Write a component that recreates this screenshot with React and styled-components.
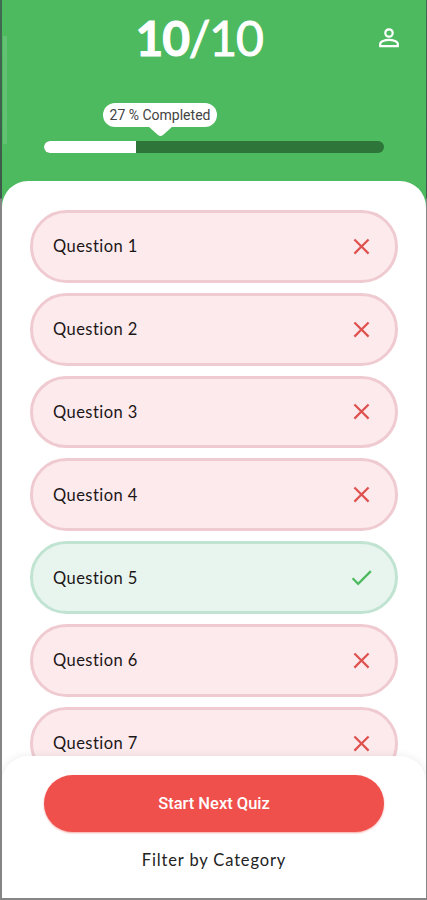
import React from "react";
import styled, { createGlobalStyle } from "styled-components";
import { MdCheck, MdClose } from "react-icons/md";

const GlobalStyle = createGlobalStyle`
  * {
    box-sizing: border-box;
  }
  body {
    margin: 0;
    background: #8b8b8b;
    font-family: Lato, "Liberation Sans", sans-serif;
  }
`;

const Screen = styled.div`
  width: 427px;
  height: 900px;
  padding: 0 1px 2px 2px;
  background: linear-gradient(#416b53 0px, #3d594a 198px, #858585 199px);
`;

const Page = styled.div`
  display: flex;
  flex-direction: column;
  height: 898px;
  overflow: hidden;
  background: linear-gradient(#62c172, #62c172) 1px 36px / 4px 108px no-repeat #4dba5f;
`;

const Header = styled.header`
  display: grid;
  grid-template-columns: 1fr auto 1fr;
  align-items: center;
  height: 76px;
  padding: 0 27px 0 0;
`;

const Score = styled.h1`
  grid-column: 2;
  margin: 0;
  width: 130px;
  color: #fff;
  font-size: 48px;
  line-height: 76px;
  font-weight: 400;
  letter-spacing: -1.2px;
  white-space: nowrap;
  -webkit-text-stroke: 1px #fff;
`;

const Current = styled.span`
  font-weight: 700;
`;

const ProfileIcon = styled.svg`
  grid-column: 3;
  justify-self: end;
  width: 20px;
  height: 20px;
`;

const Progress = styled.div`
  height: 105px;
  padding: 27px 42px 0;
`;

const Tooltip = styled.div`
  position: relative;
  width: 114px;
  height: 24px;
  margin: 0 0 14px 59px;
  border-radius: 12px;
  background: #fff;
  color: #444;
  font-family: Roboto, sans-serif;
  font-size: 14px;
  line-height: 24px;
  text-align: center;
  white-space: nowrap;
`;

const Pointer = styled.svg`
  position: absolute;
  left: 45px;
  top: 23px;
  width: 25px;
  height: 11px;
`;

const Track = styled.div`
  height: 12px;
  border-radius: 6px;
  overflow: hidden;
  background: #2d7539;
`;

const Fill = styled.div`
  width: ${({ $percent }) => $percent}%;
  height: 100%;
  background: #fff;
`;

const Sheet = styled.main`
  flex: 1;
  display: flex;
  flex-direction: column;
  min-height: 0;
  border-radius: 26px 26px 0 0;
  overflow: hidden;
  background: #fff;
`;

const List = styled.div`
  flex: 1;
  display: flex;
  flex-direction: column;
  gap: 10px;
  min-height: 0;
  padding: 29px 28px 0;
  overflow: hidden;
`;

const Row = styled.div`
  display: flex;
  flex-shrink: 0;
  align-items: center;
  justify-content: space-between;
  height: 72.8px;
  padding: 0 20px;
  border: 3px solid ${({ $correct }) => ($correct ? "#c1e3d2" : "#efcbd1")};
  border-radius: 37px;
  background: ${({ $correct }) => ($correct ? "#e8f5ee" : "#fdeaec")};
  color: ${({ $correct }) => ($correct ? "#4dba5f" : "#df514f")};

  svg {
    width: 27px;
    height: 27px;
  }
`;

const Label = styled.span`
  color: #1b1718;
  font-size: 16.5px;
  line-height: 20px;
  letter-spacing: 0.45px;
`;

const Footer = styled.footer`
  position: relative;
  display: flex;
  flex-direction: column;
  align-items: center;
  height: 142px;
  margin-top: -24px;
  padding: 19px 42px 0;
  border-radius: 26px 26px 0 0;
  background: #fff;
  box-shadow: 0 0 8px rgba(0, 0, 0, 0.09);
`;

const StartButton = styled.button`
  width: 100%;
  height: 57px;
  flex-shrink: 0;
  border: 0;
  border-radius: 29px;
  background: #ef504b;
  color: #fff;
  font-family: Roboto, sans-serif;
  font-size: 16.5px;
  font-weight: 500;
  box-shadow: 0 1px 2px rgba(239, 80, 75, 0.5);
`;

const FilterButton = styled.button`
  margin-top: 18px;
  padding: 0;
  border: 0;
  background: none;
  color: #222;
  font-family: inherit;
  font-size: 16.5px;
  line-height: 20px;
  letter-spacing: 0.85px;
`;

const questions = [1, 2, 3, 4, 5, 6, 7].map((number) => ({
  number,
  correct: number === 5,
}));

const App = () => {
  return (
    <Screen>
      <GlobalStyle />
      <Page>
        <Header>
          <Score>
            <Current>10</Current>/10
          </Score>
          <ProfileIcon viewBox="0 0 20 20" fill="none" stroke="#fff" strokeWidth="2.2">
            <circle cx="10" cy="5" r="3.7" />
            <path d="M1.2 18.200v-2.400c0-2.400 4.600-4 8.800-4s8.800 1.600 8.800 4v2.400z" />
          </ProfileIcon>
        </Header>
        <Progress>
          <Tooltip>
            27 % Completed
            <Pointer viewBox="0 0 25 11">
              <path d="M0 0H25L15 9Q12.500 11 10 9Z" fill="#fff" />
            </Pointer>
          </Tooltip>
          <Track>
            <Fill $percent={27} />
          </Track>
        </Progress>
        <Sheet>
          <List>
            {questions.map(({ number, correct }) => (
              <Row key={number} $correct={correct}>
                <Label>Question {number}</Label>
                {correct ? <MdCheck /> : <MdClose />}
              </Row>
            ))}
          </List>
          <Footer>
            <StartButton>Start Next Quiz</StartButton>
            <FilterButton>Filter by Category</FilterButton>
          </Footer>
        </Sheet>
      </Page>
    </Screen>
  );
};

export default App;
